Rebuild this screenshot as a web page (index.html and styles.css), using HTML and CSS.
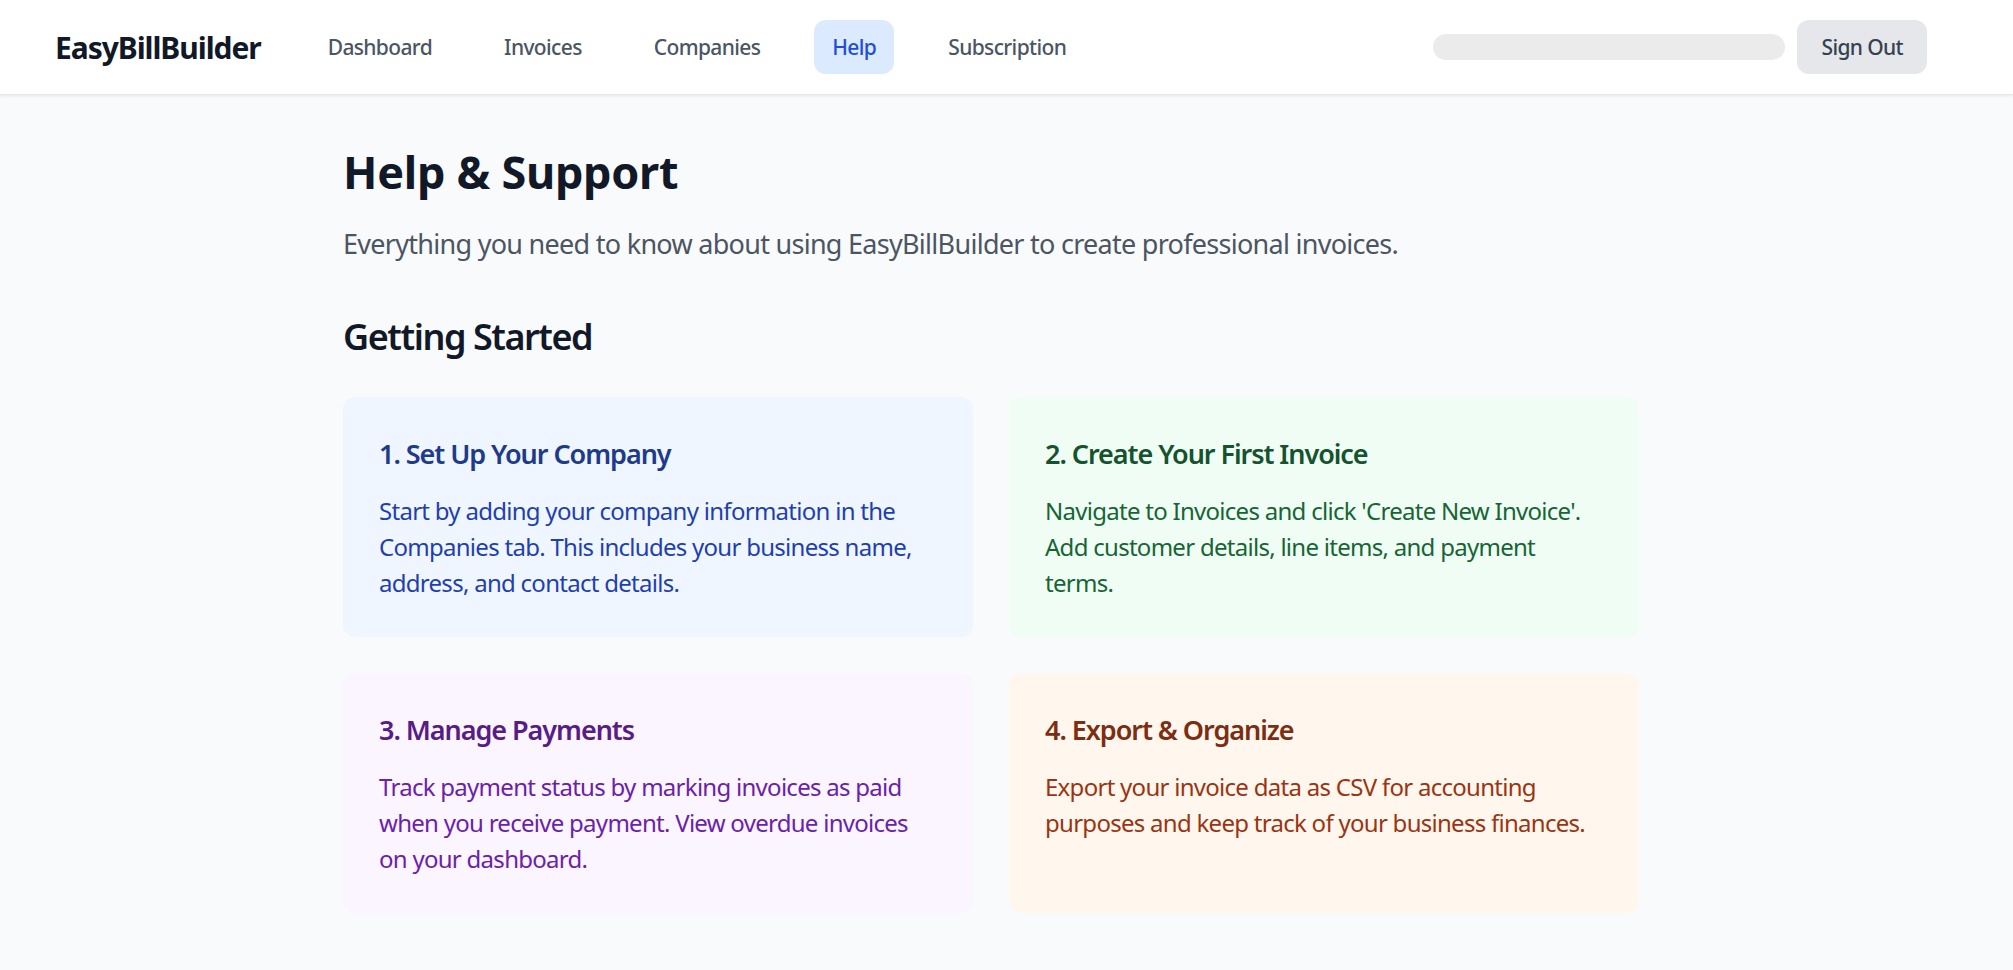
FILE: index.html
```html
<!DOCTYPE html>
<html lang="en">
<head>
<meta charset="utf-8">
<title>Help & Support - EasyBillBuilder</title>
<link rel="stylesheet" href="styles.css">
</head>
<body>
<nav class="topbar">
  <div class="topbar-left">
    <div class="logo">EasyBillBuilder</div>
    <div class="nav-links">
      <a class="nav-link">Dashboard</a>
      <a class="nav-link">Invoices</a>
      <a class="nav-link">Companies</a>
      <a class="nav-link active">Help</a>
      <a class="nav-link">Subscription</a>
    </div>
  </div>
  <div class="topbar-right">
    <span class="redacted"></span>
    <button class="signout">Sign Out</button>
  </div>
</nav>
<main class="main">
  <h1 class="page-title">Help &amp; Support</h1>
  <p class="page-sub">Everything you need to know about using EasyBillBuilder to create professional invoices.</p>
  <h2 class="section-title">Getting Started</h2>
  <div class="cards">
    <div class="card card-blue">
      <h3 class="card-title">1. Set Up Your Company</h3>
      <p class="card-text">Start by adding your company information in the Companies tab. This includes your business name, address, and contact details.</p>
    </div>
    <div class="card card-green">
      <h3 class="card-title">2. Create Your First Invoice</h3>
      <p class="card-text">Navigate to Invoices and click 'Create New Invoice'. Add customer details, line items, and payment terms.</p>
    </div>
    <div class="card card-purple">
      <h3 class="card-title">3. Manage Payments</h3>
      <p class="card-text">Track payment status by marking invoices as paid when you receive payment. View overdue invoices on your dashboard.</p>
    </div>
    <div class="card card-orange">
      <h3 class="card-title">4. Export &amp; Organize</h3>
      <p class="card-text">Export your invoice data as CSV for accounting purposes and keep track of your business finances.</p>
    </div>
  </div>
</main>
</body>
</html>
```
FILE: styles.css
```css
* { box-sizing: border-box; }
html, body { margin: 0; padding: 0; }
body {
  background: #f9fafb;
  font-family: "Noto Sans", "Open Sans", sans-serif;
  letter-spacing: -0.045em;
  color: #111827;
  min-height: 970px;
}
.topbar {
  height: 95px;
  background: #ffffff;
  box-shadow: 0 1px 3px rgba(0,0,0,0.08);
  border-bottom: 1px solid #e5e7eb;
  display: flex;
  align-items: center;
  justify-content: space-between;
  padding: 0 86px 0 55px;
}
.topbar-left { display: flex; align-items: center; }
.logo {
  font-size: 30px;
  font-weight: 700;
  color: #111827;
  letter-spacing: -0.035em;
}
.nav-links {
  display: flex;
  gap: 36px;
  margin-left: 49px;
}
.nav-link {
  font-size: 21px;
  line-height: 30px;
  font-weight: 500;
  color: #4b5563;
  padding: 12px 18px;
  border-radius: 12px;
  letter-spacing: -0.03em;
}
.nav-link.active {
  background: #dbeafe;
  color: #1d4ed8;
}
.topbar-right { display: flex; align-items: center; gap: 12px; }
.redacted {
  display: block;
  width: 352px;
  height: 26px;
  background: #ebebeb;
  border-radius: 13px;
}
.signout {
  font-family: inherit;
  letter-spacing: -0.03em;
  font-size: 21px;
  line-height: 30px;
  font-weight: 500;
  color: #374151;
  background: #e5e7eb;
  border: none;
  border-radius: 12px;
  padding: 12px 24px;
}
.main {
  width: 1344px;
  margin-left: 319px;
  padding: 50px 24px 48px;
}
.page-title {
  margin: 0;
  font-size: 45px;
  line-height: 54px;
  font-weight: 700;
  color: #111827;
  letter-spacing: -0.006em;
}
.page-sub {
  margin: 24px 0 48px;
  font-size: 27px;
  line-height: 42px;
  color: #4b5563;
}
.section-title {
  margin: 0 0 36px;
  font-size: 36px;
  line-height: 48px;
  font-weight: 600;
  color: #111827;
  letter-spacing: -0.04em;
}
.cards {
  display: grid;
  grid-template-columns: 1fr 1fr;
  gap: 36px;
}
.card {
  border-radius: 12px;
  padding: 36px;
}
.card-title {
  margin: 0 0 18px;
  font-size: 27px;
  line-height: 42px;
  font-weight: 600;
  letter-spacing: -0.039em;
}
.card-text {
  margin: 0;
  font-size: 24px;
  line-height: 36px;
}
.card-blue { background: #eff6ff; }
.card-blue .card-title { color: #1e3a8a; }
.card-blue .card-text { color: #1e40af; }
.card-green { background: #f0fdf4; }
.card-green .card-title { color: #14532d; }
.card-green .card-text { color: #166534; }
.card-purple { background: #faf5ff; }
.card-purple .card-title { color: #581c87; }
.card-purple .card-text { color: #6b21a8; }
.card-orange { background: #fff7ed; }
.card-orange .card-title { color: #7c2d12; }
.card-orange .card-text { color: #9a3412; }
```
